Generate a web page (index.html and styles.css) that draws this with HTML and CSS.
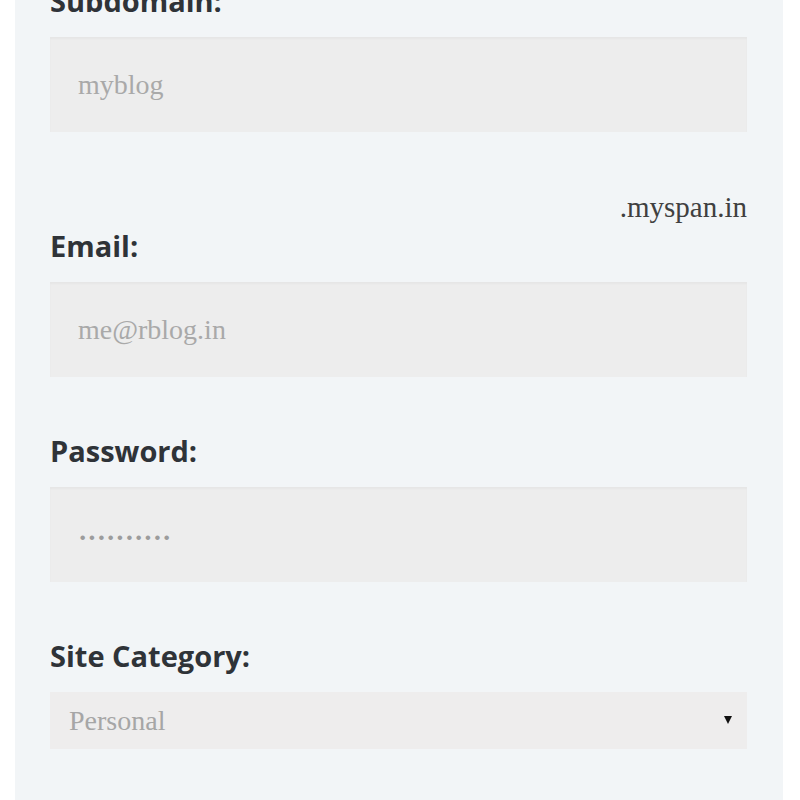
FILE: index.html
```html
<!DOCTYPE html>
<html lang="en">
<head>
<meta charset="utf-8">
<title>Sign up</title>
<link rel="stylesheet" href="styles.css">
</head>
<body>
<form class="panel">
  <label class="label" for="sub">Subdomain:</label>
  <input class="field" id="sub" type="text" placeholder="myblog">
  <div class="suffix">.myspan.in</div>

  <label class="label" for="email">Email:</label>
  <input class="field" id="email" type="text" placeholder="me@rblog.in">

  <label class="label label-gap" for="pw">Password:</label>
  <input class="field field-pw" id="pw" type="text" placeholder="··········">

  <label class="label label-gap" for="cat">Site Category:</label>
  <div class="select-wrap">
    <select class="select" id="cat">
      <option>Personal</option>
      <option>Business</option>
    </select>
  </div>
</form>
</body>
</html>
```

FILE: styles.css
```css
html, body {
  margin: 0;
  padding: 0;
  background: #ffffff;
}

.panel {
  display: flex;
  flex-direction: column;
  margin: -19px 17px 0 15px;
  padding: 0 36px 0 35px;
  min-height: 840px;
  background: #f2f5f7;
}

.label {
  font-family: "Open Sans", "DejaVu Sans", sans-serif;
  font-weight: 700;
  font-size: 29px;
  line-height: 40px;
  color: #2f3338;
  margin-bottom: 16px;
}

.label-gap {
  margin-top: 54px;
}

.field {
  box-sizing: border-box;
  height: 95px;
  width: 100%;
  margin: 0;
  padding: 0 0 0 28px;
  border: 0;
  border-top: 1px solid #e6e6e6;
  background: #ededed;
  box-shadow: inset 0 1px 2px rgba(0, 0, 0, 0.03);
  font-family: "Liberation Serif", "Times New Roman", serif;
  font-size: 28px;
  color: #555;
  outline: none;
}

.field::placeholder {
  color: #a9a9a9;
  opacity: 1;
}

.field-pw {
  padding-top: 6px;
}

.field-pw::placeholder {
  font-weight: 700;
  letter-spacing: 0;
  color: #9c9c9c;
}

.suffix {
  margin-top: 59px;
  text-align: right;
  font-family: "Liberation Serif", "Times New Roman", serif;
  font-size: 29px;
  line-height: 32px;
  color: #404040;
  margin-bottom: 3px;
}

.select-wrap {
  position: relative;
}

.select {
  box-sizing: border-box;
  appearance: none;
  -webkit-appearance: none;
  width: 100%;
  height: 57px;
  margin: 0;
  padding: 0 0 0 19px;
  border: 0;
  border-radius: 0;
  background: #eeeded;
  font-family: "Liberation Serif", "Times New Roman", serif;
  font-size: 28px;
  color: #a6a6a6;
  outline: none;
}

.select-wrap::after {
  content: "";
  position: absolute;
  right: 15px;
  top: 24px;
  border-left: 4px solid transparent;
  border-right: 4px solid transparent;
  border-top: 8px solid #111;
  pointer-events: none;
}
```
